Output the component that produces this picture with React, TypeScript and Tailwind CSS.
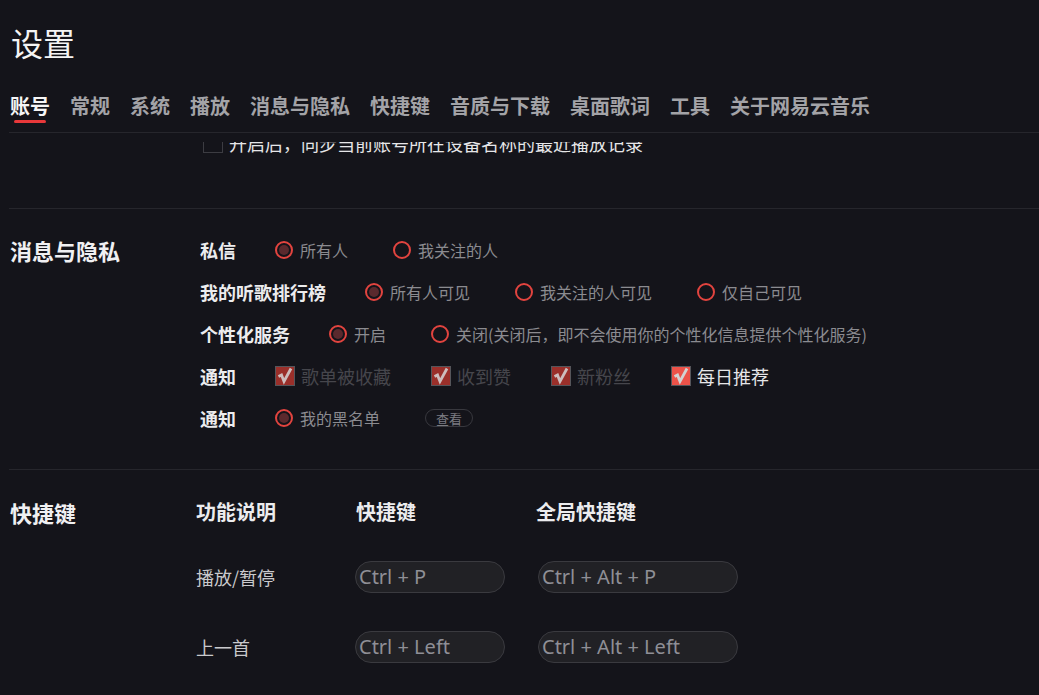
import React from "react";

const FONT = "font-['Noto_Sans_CJK_SC','Noto_Sans',sans-serif]";

function Radio({ checked, label }: { checked?: boolean; label: string }) {
  return (
    <div className="flex items-center mr-[45px]">
      <div className="w-[18px] h-[18px] rounded-full border-2 border-[#e2443f] flex items-center justify-center">
        {checked && <div className="w-[10px] h-[10px] rounded-full bg-[#5a292d]" />}
      </div>
      <span className="ml-[7px] text-[16px] text-[#8b8b90]">{label}</span>
    </div>
  );
}

function Check({ label, active }: { label: string; active?: boolean }) {
  return (
    <div className="flex items-center mr-[40px]">
      <div
        className={
          "w-[20px] h-[20px] border border-[#55555a] flex items-center justify-center " +
          (active ? "bg-[#ec5249]" : "bg-[#9a2f2a]")
        }
      >
        <svg width="16" height="18" viewBox="0 0 16 18">
          <path d="M1.5 9.5 L4.5 8 L7 14.5 L14 1.5" fill="none" stroke={active ? "#d2d2d2" : "#cdbdbd"} strokeWidth="2.8" strokeLinejoin="miter" />
        </svg>
      </div>
      <span className={"ml-[6px] text-[18px] " + (active ? "text-[#e6e6e8]" : "text-[#46464c]")}>{label}</span>
    </div>
  );
}

function Row({ label, children }: { label: string; children: React.ReactNode }) {
  return (
    <div className="h-[42px] flex items-center">
      <span className="text-[18px] font-bold text-[#ececee] mr-[39px]">{label}</span>
      {children}
    </div>
  );
}

function KeyInput({ w, text }: { w: string; text: string }) {
  return (
    <div className={"h-[32px] rounded-full border border-[#3a3a3f] bg-[#212125] flex items-center pl-[3px] " + w}>
      <span className="text-[20px] text-[#8f8f96] font-['Noto_Sans',sans-serif] leading-none">{text}</span>
    </div>
  );
}

export default function App() {
  const tabs = ["账号", "常规", "系统", "播放", "消息与隐私", "快捷键", "音质与下载", "桌面歌词", "工具", "关于网易云音乐"];
  return (
    <div className={"w-full h-screen overflow-hidden bg-[#14141a] flex flex-col " + FONT}>
      {/* header */}
      <div className="shrink-0 pb-[9px] bg-[#14141a]">
        <div className="pl-[11px] pt-[22px] text-[32px] leading-[40px] text-[#f4f4f4]">设置</div>
        <div className="ml-[9px] mt-[30px] border-b border-[#26262c] pb-[9px] flex gap-[20px] pl-[1px]">
          {tabs.map((t, i) => (
            <div key={t} className="flex flex-col items-center">
              <span className={"text-[20px] leading-[28px] font-bold " + (i === 0 ? "text-[#f5f5f5]" : "text-[#a3a3a7]")}>{t}</span>
              <div className={"h-[3px] w-[32px] rounded-full " + (i === 0 ? "bg-[#e8383a]" : "bg-transparent")} />
            </div>
          ))}
        </div>
      </div>

      {/* content */}
      <div className="flex-1 overflow-hidden">
        <div className="-mt-[19px] h-[85px] flex items-start pl-[203px]">
          <div className="h-[40px] flex items-center">
            <div className="w-[20px] h-[20px] border border-[#3c3c42]" />
            <span className="ml-[6px] text-[18px] text-[#e6e6e8]">开启后，同步当前账号所在设备名称的最近播放记录</span>
          </div>
        </div>

        {/* 消息与隐私 */}
        <div className="ml-[9px] border-t border-[#26262c] flex pt-[20px] pb-[30px]">
          <div className="w-[191px] pl-[1px] text-[22px] leading-[42px] font-bold text-[#f0f0f2]">消息与隐私</div>
          <div className="flex flex-col">
            <Row label="私信">
              <Radio checked label="所有人" />
              <Radio label="我关注的人" />
            </Row>
            <Row label="我的听歌排行榜">
              <Radio checked label="所有人可见" />
              <Radio label="我关注的人可见" />
              <Radio label="仅自己可见" />
            </Row>
            <Row label="个性化服务">
              <Radio checked label="开启" />
              <Radio label="关闭(关闭后，即不会使用你的个性化信息提供个性化服务)" />
            </Row>
            <Row label="通知">
              <Check label="歌单被收藏" />
              <Check label="收到赞" />
              <Check label="新粉丝" />
              <Check active label="每日推荐" />
            </Row>
            <Row label="通知">
              <Radio checked label="我的黑名单" />
              <div className="w-[48px] h-[18px] rounded-full border border-[#38383e] flex items-center justify-center text-[13px] leading-none text-[#7c7c82]">
                查看
              </div>
            </Row>
          </div>
        </div>

        {/* 快捷键 */}
        <div className="ml-[9px] border-t border-[#26262c] flex pt-[28px]">
          <div className="w-[187px] pl-[1px] text-[22px] leading-[28px] font-bold text-[#f0f0f2]">快捷键</div>
          <div className="flex flex-col">
            <div className="h-[28px] flex items-center text-[20px] font-bold text-[#ececee]">
              <span className="w-[160px]">功能说明</span>
              <span className="w-[180px]">快捷键</span>
              <span>全局快捷键</span>
            </div>
            <div className="mt-[16px] h-[70px] flex items-center">
              <span className="w-[159px] text-[18px] text-[#c9c9cc]">播放/暂停</span>
              <div className="w-[183px]">
                <KeyInput w="w-[150px]" text="Ctrl + P" />
              </div>
              <KeyInput w="w-[200px]" text="Ctrl + Alt + P" />
            </div>
            <div className="h-[70px] flex items-center">
              <span className="w-[159px] text-[18px] text-[#c9c9cc]">上一首</span>
              <div className="w-[183px]">
                <KeyInput w="w-[150px]" text="Ctrl + Left" />
              </div>
              <KeyInput w="w-[200px]" text="Ctrl + Alt + Left" />
            </div>
          </div>
        </div>
      </div>
    </div>
  );
}
